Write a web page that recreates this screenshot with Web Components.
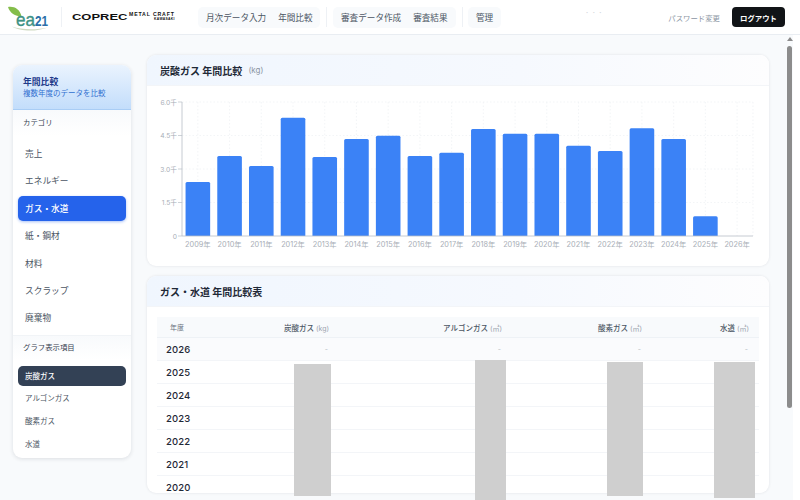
<!DOCTYPE html>
<html lang="ja">
<head>
<meta charset="utf-8">
<title>年間比較</title>
<style>
  html, body { margin: 0; height: 100%; overflow: hidden; }
  body {
    font-family: "Inter", "Noto Sans CJK JP", sans-serif;
    background: #f8fafc;
    color: #1f2937;
  }
</style>
</head>
<body>
<app-shell></app-shell>

<script>
class AppHeader extends HTMLElement {
  constructor() {
    super();
    this.attachShadow({ mode: 'open' });
    this.shadowRoot.innerHTML = `
      <style>
        :host { display: flex; align-items: center; height: 34px; padding: 0 15px 0 8px; background: #fff; border-bottom: 1px solid #e9edf2; box-sizing: content-box; }
        .ea { width: 41px; height: 28px; flex: none; overflow: visible; }
        .sep { width: 1px; height: 20px; background: #eef1f5; flex: none; }
        .coprec { display: flex; align-items: center; margin-left: 10px; width: 104px; color: #111; flex: none; }
        .coprec b { font: 700 9.4px "Liberation Sans", sans-serif; transform: scaleX(1.38); transform-origin: left; width: 57px; flex: none; margin-top: -1px; }
        .coprec span { display: flex; flex-direction: column; font: 700 5.2px/5px "Liberation Sans", sans-serif; letter-spacing: .85px; white-space: nowrap; margin-top: -2px; }
        .coprec small { font-size: 3.4px; line-height: 4px; text-align: right; letter-spacing: .3px; }
        .group { display: flex; align-items: center; gap: 12px; height: 21px; padding: 0 8px; background: #f8fafc; border-radius: 5px; font-size: 8.6px; color: #4b5563; white-space: nowrap; flex: none; }
        .dots { flex: 1; text-align: center; color: #d3d7dc; font-size: 9px; letter-spacing: 4px; line-height: 8px; margin-bottom: 8px; padding-left: 22px; }
        .pw { font-size: 7.4px; color: #8b95a3; margin-right: 12px; white-space: nowrap; }
        button { width: 53px; height: 20px; border: 0; border-radius: 4px; background: #111417; color: #fff; font: 700 7.4px "Inter", "Noto Sans CJK JP", sans-serif; padding: 0; flex: none; }
      </style>
      <svg class="ea" viewBox="0 0 41 28">
        <path d="M0 4 C6 3 12 6 13.5 13.5 C7 13.5 2 10 0 4 Z" fill="#84bd4a"/>
        <path d="M4 23.5 C14 27 28 27 40 24.5 C28 29 12 28.5 4 23.5 Z" fill="#cfdac2"/>
        <text x="8" y="23" font-family="Liberation Sans, sans-serif" font-size="18.5" fill="#3d9284" stroke="#3d9284" stroke-width=".35" textLength="19" lengthAdjust="spacingAndGlyphs">ea</text>
        <text x="27" y="23" font-family="Liberation Sans, sans-serif" font-size="15" font-weight="700" fill="#2a6fa8" textLength="13" lengthAdjust="spacingAndGlyphs">21</text>
      </svg>
      <div class="sep" style="margin-left:12px"></div>
      <div class="coprec"><b>COPREC</b><span>METAL CRAFT<small>KAWASAKI</small></span></div>
      <div class="group" style="width:106px;margin-left:22px">月次データ入力<span>年間比較</span></div>
      <div class="sep" style="margin:0 6px"></div>
      <div class="group" style="width:107px">審査データ作成<span>審査結果</span></div>
      <div class="sep" style="margin:0 5px 0 6px"></div>
      <div class="group">管理</div>
      <div class="dots">···</div>
      <span class="pw">パスワード変更</span>
      <button>ログアウト</button>
    `;
  }
}

class SideMenu extends HTMLElement {
  constructor() {
    super();
    this.attachShadow({ mode: 'open' });
    const cats = ['売上', 'エネルギー', 'ガス・水道', '紙・鋼材', '材料', 'スクラップ', '廃棄物'];
    const items = ['炭酸ガス', 'アルゴンガス', '酸素ガス', '水道'];
    this.shadowRoot.innerHTML = `
      <style>
        :host { display: block; width: 118px; flex: none; margin-top: 30px; margin-right: 1px; align-self: flex-start; background: #fff; border-radius: 9px; box-shadow: 0 1px 4px rgba(15,23,42,.12); overflow: hidden; box-sizing: border-box; }
        .head { height: 45px; box-sizing: border-box; padding: 10px 10px 0; background: linear-gradient(180deg, #eaf3fe, #c3ddfb); border-bottom: 1px solid #a9cdf5; }
        .head b { display: block; font-size: 8.8px; line-height: 13px; color: #1e3a8a; }
        .head span { display: block; font-size: 7.5px; line-height: 11px; color: #2f6fd0; }
        .label { height: 26px; line-height: 25px; padding-left: 10px; font-size: 7.4px; color: #374151; background: linear-gradient(180deg, #f8fafc, #fff); }
        .cats { display: flex; flex-direction: column; padding: 5px 5px 2px; border-bottom: 1px solid #f1f4f7; }
        .cats div { height: 25px; line-height: 27px; margin-bottom: 2.4px; padding-left: 7px; font-size: 8.7px; color: #4b5563; border-radius: 5px; }
        .cats .on { background: #2563eb; color: #fff; font-weight: 500; box-shadow: 0 1px 3px rgba(37,99,235,.4); }
        .label.two { height: 24px; margin-bottom: 6px; line-height: 23px; }
        .items { display: flex; flex-direction: column; gap: 2.6px; padding: 0 5px 4px; }
        .items div { height: 20px; line-height: 22px; padding-left: 7px; font-size: 7.5px; color: #4b5563; border-radius: 5px; }
        .items .on { background: #334155; color: #fff; font-weight: 500; }
      </style>
      <div class="head"><b>年間比較</b><span>複数年度のデータを比較</span></div>
      <div class="label">カテゴリ</div>
      <div class="cats">${cats.map(c => `<div class="${c === 'ガス・水道' ? 'on' : ''}">${c}</div>`).join('')}</div>
      <div class="label two">グラフ表示項目</div>
      <div class="items">${items.map((c, i) => `<div class="${i === 0 ? 'on' : ''}">${c}</div>`).join('')}</div>
    `;
  }
}

class PanelCard extends HTMLElement {
  constructor() {
    super();
    this.attachShadow({ mode: 'open' });
  }

  connectedCallback() {
    const unit = this.getAttribute('unit');
    this.shadowRoot.innerHTML = `
      <style>
        :host { display: block; position: relative; flex: none; background: #fff; border-radius: 9px; box-shadow: 0 0 3px rgba(15,23,42,.1); }
        .head { height: 31px; display: flex; align-items: center; gap: 5px; padding-left: 13px; background: linear-gradient(90deg, #f0f6fe, #f6f9fe 60%, #fdfdfe); border-bottom: 1px solid #f3f5f8; border-radius: 9px 9px 0 0; box-sizing: border-box; }
        b { font-size: 10px; font-weight: 700; color: #1f2937; }
        span { font-size: 8px; color: #8b95a3; padding-left: 1px; }
      </style>
      <div class="head"><b>${this.getAttribute('heading')}</b>${unit ? `<span>${unit}</span>` : ''}</div>
      <slot></slot>
    `;
  }
}

class BarChart extends HTMLElement {
  constructor() {
    super();
    this.attachShadow({ mode: 'open' });
    // バーの上端 (ページ座標)
    const tops = [182, 156, 166, 117.7, 157, 139, 135.7, 156, 152.7, 129, 133.7, 133.7, 145.7, 151, 128.3, 139, 216.3, 236];
    const x0 = 35, step = 31.72, y0 = 150, oy = 86;
    const ticks = [['6.0千', 102], ['4.5千', 135.5], ['3.0千', 169], ['1.5千', 202.5], ['0', 236]];
    let s = '';
    ticks.forEach(([t, y]) => {
      const yy = y - oy;
      if (y !== 236) s += `<line x1="${x0}" x2="${x0 + step * 18}" y1="${yy}" y2="${yy}" stroke="#eef1f4" stroke-width=".7" stroke-dasharray="1.5 2"/>`;
      s += `<line x1="${x0 - 4}" x2="${x0}" y1="${yy}" y2="${yy}" stroke="#b8bec6" stroke-width=".7"/>`;
      s += `<text x="${x0 - 5}" y="${yy + 2.5}" text-anchor="end" font-size="6.7" fill="#a8aeb6">${t}</text>`;
    });
    tops.forEach((top, i) => {
      const cx = x0 + step * (i + .5);
      s += `<line x1="${cx}" x2="${cx}" y1="16" y2="${y0}" stroke="#eef1f4" stroke-width=".7" stroke-dasharray="1.5 2"/>`;
    });
    s += `<line x1="${x0 + step * 18}" x2="${x0 + step * 18}" y1="16" y2="${y0}" stroke="#eef1f4" stroke-width=".7" stroke-dasharray="1.5 2"/>`;
    tops.forEach((top, i) => {
      const cx = x0 + step * (i + .5), h = 236 - top;
      if (h > 0) s += `<path d="M${cx - 12.3} ${y0} V${top - oy + 1.5} q0 -1.5 1.5 -1.5 H${cx + 10.8} q1.5 0 1.5 1.5 V${y0} Z" fill="#3b82f6"/>`;
      s += `<text x="${cx}" y="${y0 + 10.5}" text-anchor="middle" font-size="7.3" fill="#a8aeb6">${2009 + i}年</text>`;
    });
    s += `<line x1="${x0}" x2="${x0}" y1="16" y2="${y0}" stroke="#b8bec6" stroke-width=".8"/>`;
    s += `<line x1="${x0}" x2="${x0 + step * 18}" y1="${y0}" y2="${y0}" stroke="#b8bec6" stroke-width=".8"/>`;
    this.shadowRoot.innerHTML = `
      <style>
        :host { display: block; height: 180px; }
        svg { display: block; font-family: "Inter", "Noto Sans CJK JP", sans-serif; }
      </style>
      <svg width="622" height="180" viewBox="0 0 622 180">${s}</svg>
    `;
  }
}

class YearTable extends HTMLElement {
  constructor() {
    super();
    this.attachShadow({ mode: 'open' });
    const years = [2026, 2025, 2024, 2023, 2022, 2021, 2020];
    const heads = [['炭酸ガス', '(kg)'], ['アルゴンガス', '(㎥)'], ['酸素ガス', '(㎥)'], ['水道', '(㎥)']];
    this.shadowRoot.innerHTML = `
      <style>
        :host { display: block; padding: 10px 10px 0; }
        .row { display: grid; grid-template-columns: 62px 110px 173px 140px 107px; height: 23px; align-items: center; border-bottom: 1px solid #f3f5f8; font-size: 9.5px; box-sizing: border-box; width: 602px; }
        .row:last-child { border-bottom: 0; }
        .row > * { text-align: right; }
        .row > :first-child { text-align: left; padding-left: 9px; font-weight: 500; color: #1f2937; letter-spacing: .1px; }
        .top { height: 21px; background: #f8fafc; font-size: 7.5px; font-weight: 500; color: #4b5563; border-bottom: 1px solid #eef2f6; }
        .top > :first-child { font-size: 7px; font-weight: 400; color: #6b7280; padding-left: 13px; letter-spacing: 0; }
        .top i { font-style: normal; font-weight: 400; font-size: 7px; color: #9ca3af; }
        .live { background: #fafbfd; }
        .live span { color: #b8bec6; font-size: 7px; padding-right: 1px; }
      </style>
      <div class="row top"><div>年度</div>${heads.map(h => `<div>${h[0]} <i>${h[1]}</i></div>`).join('')}</div>
      ${years.map(y => `<div class="row ${y === 2026 ? 'live' : ''}"><div>${y}</div>${y === 2026 ? '<span>-</span><span>-</span><span>-</span><span>-</span>' : ''}</div>`).join('')}
    `;
  }
}

class MaskBlock extends HTMLElement {
  constructor() {
    super();
    this.attachShadow({ mode: 'open' });
    this.shadowRoot.innerHTML = `<style>:host { display: block; position: absolute; background: #cfcfcf; }</style>`;
  }
}

class FakeScrollbar extends HTMLElement {
  constructor() {
    super();
    this.attachShadow({ mode: 'open' });
    this.shadowRoot.innerHTML = `
      <style>
        :host { display: flex; flex-direction: column; align-items: center; width: 15px; flex: none; box-sizing: border-box; padding: 2px 8px 0 2px; background: linear-gradient(90deg, #f8fafc 8px, #fff 8px); }
        .up { width: 0; height: 0; border: 3px solid transparent; border-top: 0; border-bottom: 4px solid #8c8c8c; margin-bottom: 5px; flex: none; }
        .thumb { width: 5px; height: 362px; border-radius: 2.5px; background: #8c8c8c; flex: none; }
      </style>
      <div class="up"></div><div class="thumb"></div>
    `;
  }
}

class AppShell extends HTMLElement {
  constructor() {
    super();
    this.attachShadow({ mode: 'open' });
    this.shadowRoot.innerHTML = `
      <style>
        :host { display: flex; flex-direction: column; height: 500px; overflow: hidden; }
        .body { display: flex; flex: 1; min-height: 0; background: #f8fafc; }
        .main { flex: 1; display: flex; min-width: 0; gap: 15px; padding-left: 13px; overflow: hidden; }
        .col { display: flex; flex-direction: column; gap: 10px; width: 622px; padding-top: 20px; flex: none; }
        .tbl { height: 217px; }
        mask-block.a { left: 147px; top: 88px; width: 37px; height: 132px; }
        mask-block.b { left: 328px; top: 84px; width: 31px; height: 140px; }
        mask-block.c { left: 460px; top: 86px; width: 36px; height: 134px; }
        mask-block.d { left: 567px; top: 86px; width: 41px; height: 136px; }
      </style>
      <app-header></app-header>
      <div class="body">
        <div class="main">
          <side-menu></side-menu>
          <div class="col">
            <panel-card heading="炭酸ガス 年間比較" unit="(kg)"><bar-chart></bar-chart></panel-card>
            <panel-card class="tbl" heading="ガス・水道 年間比較表">
              <year-table></year-table>
              <mask-block class="a"></mask-block>
              <mask-block class="b"></mask-block>
              <mask-block class="c"></mask-block>
              <mask-block class="d"></mask-block>
            </panel-card>
          </div>
        </div>
        <fake-scrollbar></fake-scrollbar>
      </div>
    `;
  }
}

customElements.define('app-header', AppHeader);
customElements.define('side-menu', SideMenu);
customElements.define('panel-card', PanelCard);
customElements.define('bar-chart', BarChart);
customElements.define('year-table', YearTable);
customElements.define('mask-block', MaskBlock);
customElements.define('fake-scrollbar', FakeScrollbar);
customElements.define('app-shell', AppShell);
</script>
</body>
</html>
